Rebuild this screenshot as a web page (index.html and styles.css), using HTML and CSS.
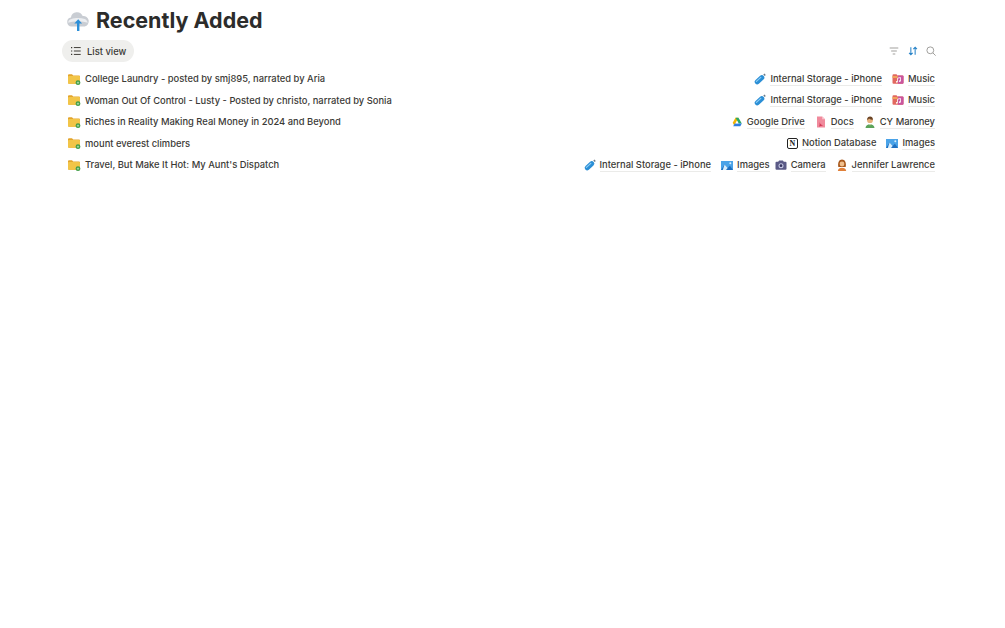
FILE: index.html
```html
<!DOCTYPE html>
<html lang="en">
<head>
  <meta charset="UTF-8">
  <title>Recently Added</title>
  <link rel="stylesheet" href="styles.css">
</head>
<body>

<svg class="sprite" width="0" height="0">
  <symbol id="folder" viewBox="0 0 14 14">
    <path d="M1 3.300a1 1 0 0 1 1-1h3l1.200 1.200h5.800a1 1 0 0 1 1 1v6.200a1 1 0 0 1-1 1H2a1 1 0 0 1-1-1z" fill="#e3a52c"/>
    <path d="M1 5a1 1 0 0 1 1-1h10a1 1 0 0 1 1 1v5.700a1 1 0 0 1-1 1H2a1 1 0 0 1-1-1z" fill="#f2c548"/>
    <circle cx="11" cy="10.700" r="2.400" fill="#3f9c46"/>
    <path d="M9.800 10.700h2.400M11 9.500v2.400" stroke="#d6f0d0" stroke-width="0.600"/>
  </symbol>
  <symbol id="usb" viewBox="0 0 14 14">
    <path d="M4.200 9.800L8.800 5.700" stroke="#2b8fd6" stroke-width="5" stroke-linecap="round" fill="none"/>
    <path d="M3.400 9.400L7.800 5.400" stroke="#8ecdf5" stroke-width="1.200" stroke-linecap="round" fill="none"/>
    <path d="M10.300 2.600l1.100-1.100 1.400 1.500-1.100 1.100z" fill="#6c7a86"/>
  </symbol>
  <symbol id="music" viewBox="0 0 14 14">
    <path d="M1.500 3.200a1 1 0 0 1 1-1h3l1.100 1.200h4.900a1 1 0 0 1 1 1v6.400a1 1 0 0 1-1 1h-9a1 1 0 0 1-1-1z" fill="#e2685f"/>
    <path d="M7 3.400h4.500a1 1 0 0 1 1 1v6.400a1 1 0 0 1-1 1H7z" fill="#c9559f"/>
    <path d="M1.500 4h5v2h-5z" fill="#f0a25c"/>
    <path d="M6.500 9.800V6.200l3-.7v3.500" stroke="#fff" stroke-width="0.800" fill="none"/>
    <circle cx="5.800" cy="9.800" r="0.900" fill="#fff"/>
    <circle cx="8.800" cy="9.100" r="0.900" fill="#fff"/>
  </symbol>
  <symbol id="drive" viewBox="0 0 14 14">
    <path d="M5.500 2.800h3L4.200 10.500l-1.500-2.700z" fill="#f4b400"/>
    <path d="M8.500 2.800l3.300 5.700H8.800L5.500 2.800z" fill="#2aa866"/>
    <path d="M4.700 8.500h7.100l-1.500 2.700H3.200z" fill="#2f7de1"/>
    <path d="M7 6.300l1.100 2H5.900z" fill="#fff"/>
  </symbol>
  <symbol id="docs" viewBox="0 0 14 14">
    <path d="M3 1.500h5.200L11 4.300v8.200H3z" fill="#f08a9c"/>
    <path d="M8.200 1.500v2.800H11z" fill="#f9c7cf"/>
    <path d="M5.200 6.800c1 2.300 2.100 3.400 4 3.800-1.700.2-3.300.6-4.400 1.300.9-1.300 1.200-3.200.4-5.100z" fill="#d33a56"/>
  </symbol>
  <symbol id="man" viewBox="0 0 14 14">
    <path d="M2.500 13c.3-2.700 2-3.800 4.500-3.800s4.200 1.100 4.500 3.800z" fill="#5ba35a"/>
    <circle cx="7" cy="5.200" r="2.900" fill="#e7b07c"/>
    <path d="M4 4.800c.2-2.300 1.400-3.400 3.100-3.400s2.800 1.100 2.900 3.400c-1.300-.2-3.200-.5-4-1.400-.4.700-1 1.200-2 1.400z" fill="#6a4426"/>
    <path d="M6 9.200l1 1.300 1-1.300z" fill="#f3e3b5"/>
  </symbol>
  <symbol id="images" viewBox="0 0 14 14">
    <path d="M1 3h12v9H1z" fill="#4aa3e8"/>
    <path d="M1 12l3.600-5.500 3 3.400 2.300-2.100 3.100 4.200z" fill="#1f6fc0"/>
    <path d="M4.600 6.500l3 3.400-1.600 2.100H2.800z" fill="#d8eefc"/>
    <circle cx="10.300" cy="5.200" r="1" fill="#d8eefc"/>
  </symbol>
  <symbol id="camera" viewBox="0 0 14 14">
    <path d="M1.500 4.800a1 1 0 0 1 1-1h1.700l.9-1.200h3.800l.9 1.200h1.700a1 1 0 0 1 1 1v6a1 1 0 0 1-1 1h-9a1 1 0 0 1-1-1z" fill="#5b5a86"/>
    <circle cx="7" cy="7.700" r="2.500" fill="#c6c8e4"/>
    <circle cx="7" cy="7.700" r="1.400" fill="#34335e"/>
  </symbol>
  <symbol id="woman" viewBox="0 0 14 14">
    <path d="M3.300 9c-.8-4.800 1-7.500 3.700-7.500S11.500 4.200 10.700 9z" fill="#a8581c"/>
    <circle cx="7" cy="6" r="2.400" fill="#f0bf8c"/>
    <path d="M2.800 13c.3-2.300 1.900-3.300 4.200-3.300s3.900 1 4.200 3.300z" fill="#e0803a"/>
  </symbol>
  <symbol id="cloud" viewBox="0 0 24 24">
    <path d="M5.500 18.500a4.600 4.600 0 0 1-.6-9.100 6.200 6.200 0 0 1 11.800-1.300 5.300 5.300 0 0 1 2 10.400z" fill="#c9cdd3"/>
    <path d="M5.500 11a4 4 0 0 0-3.300 3.800c4-1.600 15-1.600 19.500 0-.4-2-1.400-3.100-3-3.800-4-1.400-9.500-1.300-13.200 0z" fill="#eceef1"/>
    <path d="M12.200 23V13.500" stroke="#2c8fd8" stroke-width="2.400"/>
    <path d="M8.300 15.500l3.900-4.200 3.900 4.200z" fill="#2c8fd8"/>
  </symbol>
</svg>

<div class="page">
  <h1 class="title">
    <svg class="title-icon"><use href="#cloud"/></svg>
    Recently Added
  </h1>

  <div class="toolbar">
    <div class="view-tab">
      <svg class="tab-icon" viewBox="0 0 14 14" fill="none" stroke="#37352f" stroke-width="1.100">
        <path d="M4.500 3h8M4.500 7h8M4.500 11h8"/>
        <path d="M1.200 3h1.400M1.200 7h1.400M1.200 11h1.400" stroke-width="1.300"/>
      </svg>
      List view
    </div>
    <div class="tools">
      <svg class="tool" viewBox="0 0 14 14" fill="none" stroke="#9b9a97" stroke-width="1.100">
        <path d="M2 3.500h10M3.700 7h6.600M5.500 10.500h3"/>
      </svg>
      <svg class="tool" viewBox="0 0 14 14" fill="none" stroke="#2783c8" stroke-width="1.200">
        <path d="M4.500 2.500v9M2.400 9.300l2.100 2.200 2.100-2.200M9.500 11.500v-9M7.400 4.700l2.100-2.200 2.100 2.200"/>
      </svg>
      <svg class="tool" viewBox="0 0 14 14" fill="none" stroke="#9b9a97" stroke-width="1.100">
        <circle cx="6.200" cy="6.200" r="4"/>
        <path d="M9.200 9.200l3.200 3.200"/>
      </svg>
    </div>
  </div>

  <div class="list">
    <div class="row">
      <div class="row-title"><svg class="icon"><use href="#folder"/></svg>College Laundry - posted by smj895, narrated by Aria</div>
      <div class="links">
        <span class="link"><svg class="icon"><use href="#usb"/></svg><span class="label">Internal Storage - iPhone</span></span>
        <span class="link"><svg class="icon"><use href="#music"/></svg><span class="label">Music</span></span>
      </div>
    </div>
    <div class="row">
      <div class="row-title"><svg class="icon"><use href="#folder"/></svg>Woman Out Of Control - Lusty - Posted by christo, narrated by Sonia</div>
      <div class="links">
        <span class="link"><svg class="icon"><use href="#usb"/></svg><span class="label">Internal Storage - iPhone</span></span>
        <span class="link"><svg class="icon"><use href="#music"/></svg><span class="label">Music</span></span>
      </div>
    </div>
    <div class="row">
      <div class="row-title"><svg class="icon"><use href="#folder"/></svg>Riches in Reality Making Real Money in 2024 and Beyond</div>
      <div class="links">
        <span class="link"><svg class="icon"><use href="#drive"/></svg><span class="label">Google Drive</span></span>
        <span class="link"><svg class="icon"><use href="#docs"/></svg><span class="label">Docs</span></span>
        <span class="link"><svg class="icon"><use href="#man"/></svg><span class="label">CY Maroney</span></span>
      </div>
    </div>
    <div class="row">
      <div class="row-title"><svg class="icon"><use href="#folder"/></svg>mount everest climbers</div>
      <div class="links">
        <span class="link"><span class="notion-mark">N</span><span class="label">Notion Database</span></span>
        <span class="link"><svg class="icon"><use href="#images"/></svg><span class="label">Images</span></span>
      </div>
    </div>
    <div class="row">
      <div class="row-title"><svg class="icon"><use href="#folder"/></svg>Travel, But Make It Hot: My Aunt's Dispatch</div>
      <div class="links">
        <span class="link"><svg class="icon"><use href="#usb"/></svg><span class="label">Internal Storage - iPhone</span></span>
        <span class="link tight"><svg class="icon"><use href="#images"/></svg><span class="label">Images</span></span>
        <span class="link"><svg class="icon"><use href="#camera"/></svg><span class="label">Camera</span></span>
        <span class="link"><svg class="icon"><use href="#woman"/></svg><span class="label">Jennifer Lawrence</span></span>
      </div>
    </div>
  </div>
</div>

</body>
</html>
```

FILE: styles.css
```css
body {
  margin: 0;
  background: #fff;
  color: #3b3a36;
  font-family: Inter, 'Noto Sans', sans-serif;
  font-size: 9.4px;
}

.sprite {
  display: block;
}

.page {
  width: 874px;
  margin-left: 62px;
}

.title {
  display: flex;
  align-items: center;
  gap: 6px;
  margin: 0;
  padding: 6px 0 0 4px;
  height: 28px;
  font-size: 21.5px;
  line-height: 28px;
  font-weight: 700;
  color: #2c2c2b;
}

.title-icon {
  width: 24px;
  height: 24px;
}

.toolbar {
  display: flex;
  justify-content: space-between;
  align-items: center;
  margin-top: 6px;
  height: 22px;
}

.view-tab {
  display: flex;
  align-items: center;
  gap: 5px;
  height: 22px;
  padding: 0 8px;
  border-radius: 11px;
  background: #efefed;
  font-weight: 500;
}

.tab-icon {
  width: 12px;
  height: 12px;
}

.tools {
  display: flex;
  gap: 6.5px;
  margin-right: -1px;
}

.tool {
  width: 12px;
  height: 12px;
}

.list {
  margin-top: 6px;
}

.row {
  display: flex;
  justify-content: space-between;
  align-items: center;
  height: 21.5px;
}

.row-title {
  display: flex;
  align-items: center;
  gap: 4px;
  padding-left: 5px;
  font-weight: 500;
}

.icon {
  width: 14px;
  height: 14px;
  flex-shrink: 0;
}

.links {
  display: flex;
  gap: 9px;
  padding-right: 1px;
}

.link {
  display: flex;
  align-items: center;
  gap: 3px;
}

.link.tight {
  margin-right: -5px;
}

.label {
  font-weight: 500;
  border-bottom: 1px solid #ebebe9;
  line-height: 13px;
}

/* notion logo: boxed serif N */
.notion-mark {
  box-sizing: border-box;
  width: 11px;
  height: 11px;
  margin: 0 1px 0 2px;
  border: 1px solid #222;
  border-radius: 2px;
  background: #fff;
  color: #222;
  font-family: 'Liberation Serif', serif;
  font-size: 8px;
  font-weight: 700;
  line-height: 9px;
  text-align: center;
}
```
